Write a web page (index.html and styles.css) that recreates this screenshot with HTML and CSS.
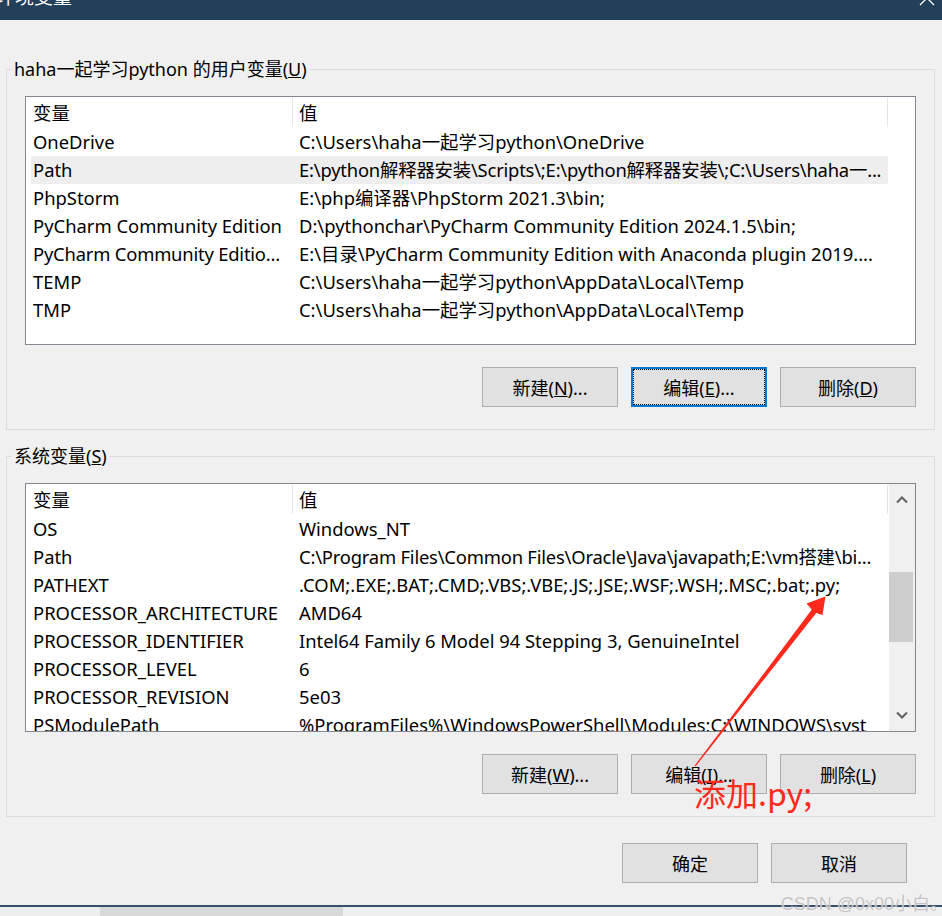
FILE: index.html
```html
<!DOCTYPE html>
<html lang="zh-CN">
<head>
    <meta charset="UTF-8">
    <title>环境变量</title>
    <link rel="stylesheet" href="styles.css">
</head>
<body>
    <div class="window">
        <div class="titlebar">
            <span class="title">环境变量</span>
            <svg class="close" width="16" height="16" viewBox="0 0 16 16">
                <path d="M1 1 L15 15 M15 1 L1 15" stroke="#ffffff" stroke-width="1.3" fill="none"/>
            </svg>
        </div>

        <fieldset class="group group-user">
            <legend>haha一起学习python 的用户变量(<u>U</u>)</legend>
            <div class="list">
                <div class="list-head">
                    <span class="head-name">变量</span>
                    <span class="head-value">值</span>
                </div>
                <div class="row"><span class="name">OneDrive</span><span class="value">C:\Users\haha一起学习python\OneDrive</span></div>
                <div class="row selected"><span class="name">Path</span><span class="value tight">E:\python解释器安装\Scripts\;E:\python解释器安装\;C:\Users\haha一...</span></div>
                <div class="row"><span class="name">PhpStorm</span><span class="value">E:\php编译器\PhpStorm 2021.3\bin;</span></div>
                <div class="row"><span class="name">PyCharm Community Edition</span><span class="value">D:\pythonchar\PyCharm Community Edition 2024.1.5\bin;</span></div>
                <div class="row"><span class="name tight">PyCharm Community Editio...</span><span class="value">E:\目录\PyCharm Community Edition with Anaconda plugin 2019....</span></div>
                <div class="row"><span class="name">TEMP</span><span class="value">C:\Users\haha一起学习python\AppData\Local\Temp</span></div>
                <div class="row"><span class="name">TMP</span><span class="value">C:\Users\haha一起学习python\AppData\Local\Temp</span></div>
            </div>
            <div class="buttons">
                <button>新建(<u>N</u>)...</button>
                <button class="focused">编辑(<u>E</u>)...</button>
                <button>删除(<u>D</u>)</button>
            </div>
        </fieldset>

        <fieldset class="group group-system">
            <legend>系统变量(<u>S</u>)</legend>
            <div class="list list-scroll">
                <div class="list-body">
                    <div class="list-head">
                        <span class="head-name">变量</span>
                        <span class="head-value">值</span>
                    </div>
                    <div class="row"><span class="name">OS</span><span class="value">Windows_NT</span></div>
                    <div class="row"><span class="name">Path</span><span class="value tight">C:\Program Files\Common Files\Oracle\Java\javapath;E:\vm搭建\bi...</span></div>
                    <div class="row"><span class="name">PATHEXT</span><span class="value">.COM;.EXE;.BAT;.CMD;.VBS;.VBE;.JS;.JSE;.WSF;.WSH;.MSC;.bat;.py;</span></div>
                    <div class="row"><span class="name">PROCESSOR_ARCHITECTURE</span><span class="value">AMD64</span></div>
                    <div class="row"><span class="name">PROCESSOR_IDENTIFIER</span><span class="value">Intel64 Family 6 Model 94 Stepping 3, GenuineIntel</span></div>
                    <div class="row"><span class="name">PROCESSOR_LEVEL</span><span class="value">6</span></div>
                    <div class="row"><span class="name">PROCESSOR_REVISION</span><span class="value">5e03</span></div>
                    <div class="row"><span class="name">PSModulePath</span><span class="value">%ProgramFiles%\WindowsPowerShell\Modules;C:\WINDOWS\syst</span></div>
                </div>
                <div class="scrollbar">
                    <div class="scroll-btn">
                        <svg width="12" height="8" viewBox="0 0 12 8"><path d="M1 6.5 L6 1.5 L11 6.5" stroke="#606060" stroke-width="2" fill="none"/></svg>
                    </div>
                    <div class="scroll-gap"></div>
                    <div class="scroll-thumb"></div>
                    <div class="scroll-rest"></div>
                    <div class="scroll-btn">
                        <svg width="12" height="8" viewBox="0 0 12 8"><path d="M1 1.5 L6 6.5 L11 1.5" stroke="#606060" stroke-width="2" fill="none"/></svg>
                    </div>
                </div>
            </div>
            <div class="buttons">
                <button>新建(<u>W</u>)...</button>
                <button>编辑(<u>I</u>)...</button>
                <button>删除(<u>L</u>)</button>
            </div>
        </fieldset>

        <div class="dialog-buttons">
            <button>确定</button>
            <button>取消</button>
        </div>

        <div class="bottom-edge">
            <div class="strip-a"></div>
            <div class="strip-b"></div>
            <div class="strip-c"></div>
        </div>

        <!-- annotation drawn over the screenshot -->
        <svg class="arrow" width="942" height="916" viewBox="0 0 942 916">
            <polygon points="694.6,765.7 811.8,609.6 806.5,603.5 825.5,596.5 822.5,615 816.2,612.9 695.6,766.4" fill="#ff2a1c"/>
        </svg>
        <div class="note">添加.py;</div>
        <div class="watermark">CSDN @0x00小白。</div>
    </div>
</body>
</html>
```

FILE: styles.css
```css
body {
    margin: 0;
    background-color: #f0f0f0;
    font-family: "Noto Sans", "Noto Sans CJK SC", sans-serif;
    color: #000000;
}
.window {
    position: relative;
    width: 942px;
    height: 916px;
    overflow: hidden;
    background-color: #f0f0f0;
}
.titlebar {
    height: 20px;
    background-color: #22405a;
    color: #ffffff;
    display: flex;
    justify-content: space-between;
    overflow: hidden;
}
.title {
    font-size: 19px;
    line-height: 20px;
    margin-top: -13px;
    margin-left: -4px;
}
.close {
    margin-top: -10px;
    margin-right: 7px;
}

/* group boxes */
.group {
    margin: 0 7px 0 6px;
    padding: 16px 18px 22px 18px;
    border: 1px solid #dcdcdc;
    min-inline-size: 0;
}
.group-user {
    margin-top: 38px;
}
.group-system {
    margin-top: 15px;
}
.group legend {
    font-size: 18px;
    line-height: 22px;
    padding: 0 2px;
    margin-left: -13px;
}

/* list views */
.list {
    height: 249px;
    box-sizing: border-box;
    border: 1px solid #828790;
    background-color: #ffffff;
    overflow: hidden;
    font-size: 18.4px;
}
.list-scroll {
    display: flex;
}
.list-body {
    width: 863px;
    overflow: hidden;
}
.list-head {
    display: flex;
    height: 31px;
}
.head-name,
.head-value {
    box-sizing: border-box;
    height: 29px;
    margin-top: 1px;
    line-height: 30px;
    border-right: 1px solid #e5e5e5;
}
.head-name {
    width: 267px;
    padding-left: 7px;
}
.head-value {
    width: 595px;
    padding-left: 6px;
}
.row {
    display: flex;
    width: 857px;
    height: 28px;
    line-height: 28px;
    margin-left: 5px;
    white-space: nowrap;
}
.row.selected {
    background-color: #eeeeee;
}
.name {
    width: 257px;
    padding-left: 2px;
    overflow: hidden;
}
.value {
    width: 589px;
    padding-left: 9px;
    overflow: hidden;
}
.tight {
    letter-spacing: -0.2px;
}

/* scrollbar */
.scrollbar {
    width: 26px;
    display: flex;
    flex-direction: column;
    background-color: #f0f0f0;
}
.scroll-btn {
    height: 32px;
    display: flex;
    align-items: center;
    justify-content: center;
}
.scroll-gap {
    height: 56px;
}
.scroll-thumb {
    height: 70px;
    margin-right: 2px;
    background-color: #cdcdcd;
}
.scroll-rest {
    flex: 1;
}

/* buttons */
.buttons {
    display: flex;
    justify-content: flex-end;
    gap: 13px;
    margin-top: 22px;
}
button {
    width: 136px;
    height: 40px;
    box-sizing: border-box;
    background-color: #e1e1e1;
    border: 1px solid #adadad;
    font-family: "Noto Sans", "Noto Sans CJK SC", sans-serif;
    font-size: 18px;
    color: #000000;
    padding: 0;
}
button.focused {
    border: 2px solid #0078d7;
    outline: 1px dotted #000000;
    outline-offset: -3px;
}
.dialog-buttons {
    display: flex;
    justify-content: flex-end;
    gap: 13px;
    margin: 26px 35px 0 0;
}

/* bottom edge of the window */
.bottom-edge {
    display: flex;
    height: 10px;
    margin-top: 22px;
    border-top: 2px solid #34506a;
}
.strip-a {
    width: 100px;
    background-color: #eeeeee;
}
.strip-b {
    width: 243px;
    background-color: #d8d8d8;
}
.strip-c {
    flex: 1;
    background-color: #efefef;
}

/* annotation overlays */
.arrow {
    position: absolute;
    left: 0;
    top: 0;
}
.note {
    position: absolute;
    left: 694px;
    top: 771px;
    font-family: "Noto Sans CJK SC", sans-serif;
    font-size: 32px;
    line-height: 42px;
    color: #ff2a1c;
}
.watermark {
    position: absolute;
    right: -6px;
    bottom: 1px;
    font-family: "Liberation Sans", "Noto Sans CJK SC", sans-serif;
    font-size: 18px;
    color: rgba(170, 170, 170, 0.7);
    text-shadow: 0 0 1px #ffffff;
}
```
